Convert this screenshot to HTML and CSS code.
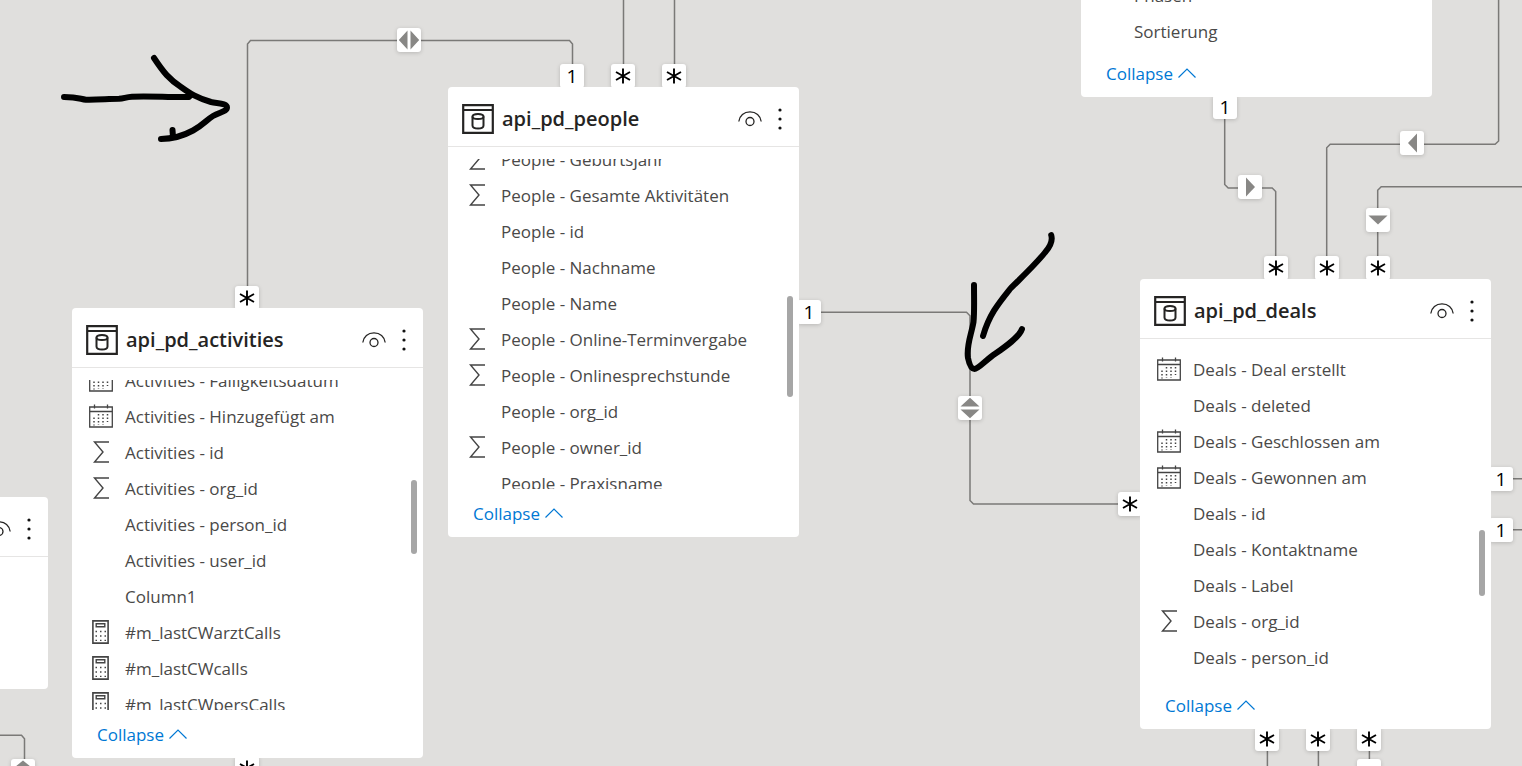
FILE: index.html
```html
<!DOCTYPE html>
<html lang="de">
<head>
<meta charset="utf-8">
<title>Model view</title>
<link rel="stylesheet" href="styles.css">
</head>
<body>
<svg class="sprite" aria-hidden="true">
  <symbol id="i-table" viewBox="0 0 32 30"><path d="M1.2 1.2h29.6v27.6H1.2zM1 6h30" fill="none" stroke="#252423" stroke-width="2.2"/><path d="M10.5 12.5v9c0 1.8 2.2 3 5.5 3s5.5-1.200 5.500-3v-9" fill="none" stroke="#252423" stroke-width="2"/><ellipse cx="16" cy="12.500" rx="5.500" ry="2.600" fill="none" stroke="#252423" stroke-width="2"/></symbol>
  <symbol id="i-eye" viewBox="0 0 24 16"><path d="M.8 10.500C1.500 4.500 6 .9 12 .9s10.500 3.600 11.200 9.600" fill="none" stroke="#252423" stroke-width="1.300"/><circle cx="12" cy="10.500" r="4" fill="none" stroke="#252423" stroke-width="1.300"/></symbol>
  <symbol id="i-more" viewBox="0 0 6 22"><g fill="#111"><circle cx="3" cy="2" r="1.600"/><circle cx="3" cy="11" r="1.600"/><circle cx="3" cy="20" r="1.600"/></g></symbol>
  <symbol id="i-sum" viewBox="0 0 24 24"><path d="M20 2H5.500l8.500 10-8.500 10H20" fill="none" stroke="#444" stroke-width="1.400"/></symbol>
  <symbol id="i-date" viewBox="0 0 24 24"><path d="M.7 3h22.600v20H.7zM.7 7.500h22.600M5.500.500v4M18.500.500v4" fill="none" stroke="#444" stroke-width="1.300"/><path d="M5 13.500v8M9.500 10v11M14 10v11M18.500 10v8" fill="none" stroke="#444" stroke-width="1.500" stroke-dasharray="1.500 2"/></symbol>
  <symbol id="i-calc" viewBox="0 0 24 24"><path d="M3.900.9h15.200v22.200H3.900z" fill="none" stroke="#444" stroke-width="1.600"/><path d="M7.200 3.800h8.600v3H7.200z" fill="none" stroke="#444" stroke-width="1.400"/><path d="M6.500 11.500H17M6.500 16H17M6.500 20.300H17" fill="none" stroke="#444" stroke-width="1.300" stroke-dasharray="1.500 3"/></symbol>
  <symbol id="i-up" viewBox="0 0 18 10"><path d="M.5 9.500 9 1l8.500 8.500" fill="none" stroke="#0078d4" stroke-width="1.200"/></symbol>
  <symbol id="i-many" viewBox="0 0 24 24"><path d="M12 4.500v15M5 8l14 8M19 8 5 16" fill="none" stroke="#000" stroke-width="1.900"/></symbol>
  <symbol id="i-h-both" viewBox="0 0 24 24"><path d="M10.500 2.500v19L1.800 12zM13.500 2.500v19l8.700-9.500z" fill="#888785"/></symbol>
  <symbol id="i-v-both" viewBox="0 0 24 24"><path d="M2.500 10.500h19L12 1.800zM2.500 13.500h19L12 22.200z" fill="#888785"/></symbol>
  <symbol id="i-left" viewBox="0 0 24 24"><path d="M17 2.500v19L8 12z" fill="#888785"/></symbol>
  <symbol id="i-right" viewBox="0 0 24 24"><path d="M8 2.500v19l9-9.500z" fill="#888785"/></symbol>
  <symbol id="i-down" viewBox="0 0 24 24"><path d="M2.500 7.500h19L12 16.500z" fill="#888785"/></symbol>
  <symbol id="i-top" viewBox="0 0 24 24"><path d="M4 8h16L12 1.500z" fill="#888785"/></symbol>
</svg>

<main class="canvas">
  <svg class="links" aria-hidden="true">
    <path d="M572.500 64V44l-3-3.500H250.500l-3 3.500V286M623.500 0V64M674.500 0V64"/>
    <path d="M821 312.300H966.500l3.500 3.500V500.500l3.500 3.500H1118"/>
    <path d="M1224.700 119V184.500l3.500 3.500H1272.200l3.500 3.500V256"/>
    <path d="M1498.600 0V141l-3.500 3.300H1330.200l-3.500 3.500V256"/>
    <path d="M1522 186.800H1381.200l-3.500 3.500V256M1513 478.800H1522M1513 529.800H1522"/>
    <path d="M1267.400 750V766M1318.400 750V766M1369.400 750V766M0 735.200H21.500l3 3.500V760"/>
  </svg>

  <span class="badge b1">1</span>
  <span class="badge b2"><svg><use href="#i-many"/></svg></span>
  <span class="badge b3"><svg><use href="#i-many"/></svg></span>
  <span class="badge b4"><svg><use href="#i-many"/></svg></span>
  <span class="badge b5"><svg><use href="#i-many"/></svg></span>
  <span class="badge b6">1</span>
  <span class="badge b7"><svg><use href="#i-many"/></svg></span>
  <span class="badge b8">1</span>
  <span class="badge b9"><svg><use href="#i-many"/></svg></span>
  <span class="badge b10"><svg><use href="#i-many"/></svg></span>
  <span class="badge b11"><svg><use href="#i-many"/></svg></span>
  <span class="badge b12">1</span>
  <span class="badge b13">1</span>
  <span class="badge b14"><svg><use href="#i-many"/></svg></span>
  <span class="badge b15"><svg><use href="#i-many"/></svg></span>
  <span class="badge b16"><svg><use href="#i-many"/></svg></span>
  <span class="badge d1"><svg><use href="#i-h-both"/></svg></span>
  <span class="badge d2"><svg><use href="#i-v-both"/></svg></span>
  <span class="badge d3"><svg><use href="#i-right"/></svg></span>
  <span class="badge d4"><svg><use href="#i-left"/></svg></span>
  <span class="badge d5"><svg><use href="#i-down"/></svg></span>
  <span class="badge d6"><svg><use href="#i-top"/></svg></span>
  <span class="badge d7"></span>

  <section class="node node-edge">
    <header class="head">
      <h2 class="name"></h2>
      <button class="icon-btn" aria-label="Hide"><svg class="eye"><use href="#i-eye"/></svg></button>
      <button class="icon-btn" aria-label="More"><svg class="more"><use href="#i-more"/></svg></button>
    </header>
  </section>

  <section class="node node-stages">
    <ul class="fields">
      <li><i class="ico"></i>Phasen</li>
      <li><i class="ico"></i>Sortierung</li>
    </ul>
    <button class="collapse">Collapse <svg class="chev"><use href="#i-up"/></svg></button>
  </section>

  <section class="node node-people">
    <header class="head">
      <svg class="table-ico"><use href="#i-table"/></svg>
      <h2 class="name">api_pd_people</h2>
      <button class="icon-btn" aria-label="Hide"><svg class="eye"><use href="#i-eye"/></svg></button>
      <button class="icon-btn" aria-label="More"><svg class="more"><use href="#i-more"/></svg></button>
    </header>
    <div class="scroll">
      <ul class="fields scrolled">
        <li><svg class="ico"><use href="#i-sum"/></svg>People - Geburtsjahr</li>
        <li><svg class="ico"><use href="#i-sum"/></svg>People - Gesamte Aktivitäten</li>
        <li><i class="ico"></i>People - id</li>
        <li><i class="ico"></i>People - Nachname</li>
        <li><i class="ico"></i>People - Name</li>
        <li><svg class="ico"><use href="#i-sum"/></svg>People - Online-Terminvergabe</li>
        <li><svg class="ico"><use href="#i-sum"/></svg>People - Onlinesprechstunde</li>
        <li><i class="ico"></i>People - org_id</li>
        <li><svg class="ico"><use href="#i-sum"/></svg>People - owner_id</li>
        <li><i class="ico"></i>People - Praxisname</li>
      </ul>
      <span class="thumb thumb-people"></span>
    </div>
    <button class="collapse">Collapse <svg class="chev"><use href="#i-up"/></svg></button>
  </section>

  <section class="node node-activities">
    <header class="head">
      <svg class="table-ico"><use href="#i-table"/></svg>
      <h2 class="name">api_pd_activities</h2>
      <button class="icon-btn" aria-label="Hide"><svg class="eye"><use href="#i-eye"/></svg></button>
      <button class="icon-btn" aria-label="More"><svg class="more"><use href="#i-more"/></svg></button>
    </header>
    <div class="scroll">
      <ul class="fields scrolled">
        <li><svg class="ico"><use href="#i-date"/></svg>Activities - Fälligkeitsdatum</li>
        <li><svg class="ico"><use href="#i-date"/></svg>Activities - Hinzugefügt am</li>
        <li><svg class="ico"><use href="#i-sum"/></svg>Activities - id</li>
        <li><svg class="ico"><use href="#i-sum"/></svg>Activities - org_id</li>
        <li><i class="ico"></i>Activities - person_id</li>
        <li><i class="ico"></i>Activities - user_id</li>
        <li><i class="ico"></i>Column1</li>
        <li><svg class="ico"><use href="#i-calc"/></svg>#m_lastCWarztCalls</li>
        <li><svg class="ico"><use href="#i-calc"/></svg>#m_lastCWcalls</li>
        <li><svg class="ico"><use href="#i-calc"/></svg>#m_lastCWpersCalls</li>
      </ul>
      <span class="thumb thumb-activities"></span>
    </div>
    <button class="collapse">Collapse <svg class="chev"><use href="#i-up"/></svg></button>
  </section>

  <section class="node node-deals">
    <header class="head">
      <svg class="table-ico"><use href="#i-table"/></svg>
      <h2 class="name">api_pd_deals</h2>
      <button class="icon-btn" aria-label="Hide"><svg class="eye"><use href="#i-eye"/></svg></button>
      <button class="icon-btn" aria-label="More"><svg class="more"><use href="#i-more"/></svg></button>
    </header>
    <div class="scroll">
      <ul class="fields">
        <li><svg class="ico"><use href="#i-date"/></svg>Deals - Deal erstellt</li>
        <li><i class="ico"></i>Deals - deleted</li>
        <li><svg class="ico"><use href="#i-date"/></svg>Deals - Geschlossen am</li>
        <li><svg class="ico"><use href="#i-date"/></svg>Deals - Gewonnen am</li>
        <li><i class="ico"></i>Deals - id</li>
        <li><i class="ico"></i>Deals - Kontaktname</li>
        <li><i class="ico"></i>Deals - Label</li>
        <li><svg class="ico"><use href="#i-sum"/></svg>Deals - org_id</li>
        <li><i class="ico"></i>Deals - person_id</li>
      </ul>
      <span class="thumb thumb-deals"></span>
    </div>
    <button class="collapse">Collapse <svg class="chev"><use href="#i-up"/></svg></button>
  </section>

  <svg class="ink" aria-hidden="true">
    <path d="M64 97C78 97 80 99 86 99.700C98 100 108 98.800 119 98.800C124 98.500 126 97 132 96.700C150 95.800 170 97.500 189 97L191 95"/>
    <path d="M154 58C164 73 169 79 181 87C190 93.500 197 98 211 102C218 103.500 227 103 227 107.500C227 111.500 220 112 213 116C207 119.500 203 125 193 130.500C181 137 172 139 161 139"/>
    <path d="M172.500 130L173 137"/>
    <path d="M1051.200 235C1053 241 1050 247 1045 252.500C1035 265 1022 277 1010 289C998 304 989 315 983 336"/>
    <path d="M974 285C974 300 974.500 312 973.500 322C971.500 334 966 346 968 358C969 363 971 369 974.500 369C978 369 984 362 992 356C1002 349 1019 338 1022 329"/>
  </svg>
</main>
</body>
</html>
```
FILE: styles.css
```css
* { box-sizing: border-box; }
body {
  margin: 0;
  font-family: "Open Sans", "Noto Sans", sans-serif;
  font-size: 17px;
  color: #4a4948;
}
.sprite { position: absolute; width: 0; height: 0; }
.canvas {
  position: relative;
  height: 100vh;
  overflow: hidden;
  background: #e0dfdd;
}
.links, .ink {
  position: absolute;
  inset: 0;
  width: 100%;
  height: 100%;
  fill: none;
  pointer-events: none;
}
.links { stroke: #7a7977; stroke-width: 1.5; }
.ink { stroke: #000; stroke-width: 6; stroke-linecap: round; stroke-linejoin: round; }

/* Table cards */
.node {
  position: absolute;
  width: 351px;
  display: flex;
  flex-direction: column;
  background: #fff;
  border-radius: 4px;
}
.node-people { left: 448px; top: 87px; }
.node-activities { left: 72px; top: 308px; }
.node-deals { left: 1140px; top: 279px; }
.node-stages { left: 1081px; top: -23px; }
.node-edge { left: -303px; top: 497px; min-height: 192px; }

.head {
  display: flex;
  align-items: center;
  height: 60px;
  padding: 4px 16px 0 14px;
  border-bottom: 1px solid #e6e5e4;
}
.table-ico { width: 32px; height: 30px; margin-right: 8px; }
.name {
  flex: 1;
  margin: 0;
  font-size: 20px;
  font-weight: 600;
  line-height: 28px;
  color: #252423;
}
.icon-btn {
  display: flex;
  padding: 0;
  border: 0;
  background: none;
}
.icon-btn + .icon-btn { margin-left: 15px; }
.eye { width: 24px; height: 16px; }
.more { width: 6px; height: 22px; }

.scroll {
  position: relative;
  height: 330px;
  margin-top: 12px;
  overflow: hidden;
}
.fields { margin: 0; padding: 0; list-style: none; }
.scrolled { margin-top: -18px; }
.fields li {
  display: flex;
  align-items: center;
  gap: 12px;
  height: 36px;
  padding-left: 17px;
  white-space: nowrap;
}
.ico { flex: none; width: 24px; height: 24px; }
.thumb {
  position: absolute;
  right: 6px;
  width: 6px;
  border-radius: 3px;
  background: #a6a6a6;
}
.thumb-people { top: 137px; height: 101px; }
.thumb-activities { top: 100px; height: 74px; }
.thumb-deals { top: 179px; height: 66px; }

.collapse {
  display: flex;
  align-items: center;
  align-self: flex-start;
  gap: 5px;
  height: 48px;
  padding: 0 0 0 25px;
  border: 0;
  background: none;
  font: inherit;
  color: #0078d4;
}
.chev { width: 18px; height: 10px; }

/* Relationship ends and filter directions */
.badge {
  position: absolute;
  display: flex;
  align-items: center;
  justify-content: center;
  width: 24px;
  height: 24px;
  border-radius: 3px;
  background: #fff;
  box-shadow: 0 1px 4px rgba(0, 0, 0, .18);
  font-size: 19px;
  font-weight: 500;
  color: #000;
}
.badge svg { width: 24px; height: 24px; }
.b1 { left: 560px; top: 64px; }
.b2 { left: 611px; top: 64px; }
.b3 { left: 662px; top: 64px; }
.b4 { left: 235px; top: 286px; }
.b5 { left: 235px; top: 756px; }
.b6 { left: 797px; top: 300px; }
.b7 { left: 1118px; top: 492px; }
.b8 { left: 1213px; top: 95px; }
.b9 { left: 1264px; top: 256px; }
.b10 { left: 1315px; top: 256px; }
.b11 { left: 1366px; top: 256px; }
.b12 { left: 1489px; top: 467px; }
.b13 { left: 1489px; top: 518px; }
.b14 { left: 1255px; top: 727px; }
.b15 { left: 1306px; top: 727px; }
.b16 { left: 1357px; top: 727px; }
.d1 { left: 397px; top: 28px; }
.d2 { left: 958px; top: 396px; }
.d3 { left: 1238px; top: 175px; }
.d4 { left: 1400px; top: 131px; }
.d5 { left: 1366px; top: 208px; }
.d6 { left: 11px; top: 759px; }
.d7 { left: 1357px; top: 759px; }
```
